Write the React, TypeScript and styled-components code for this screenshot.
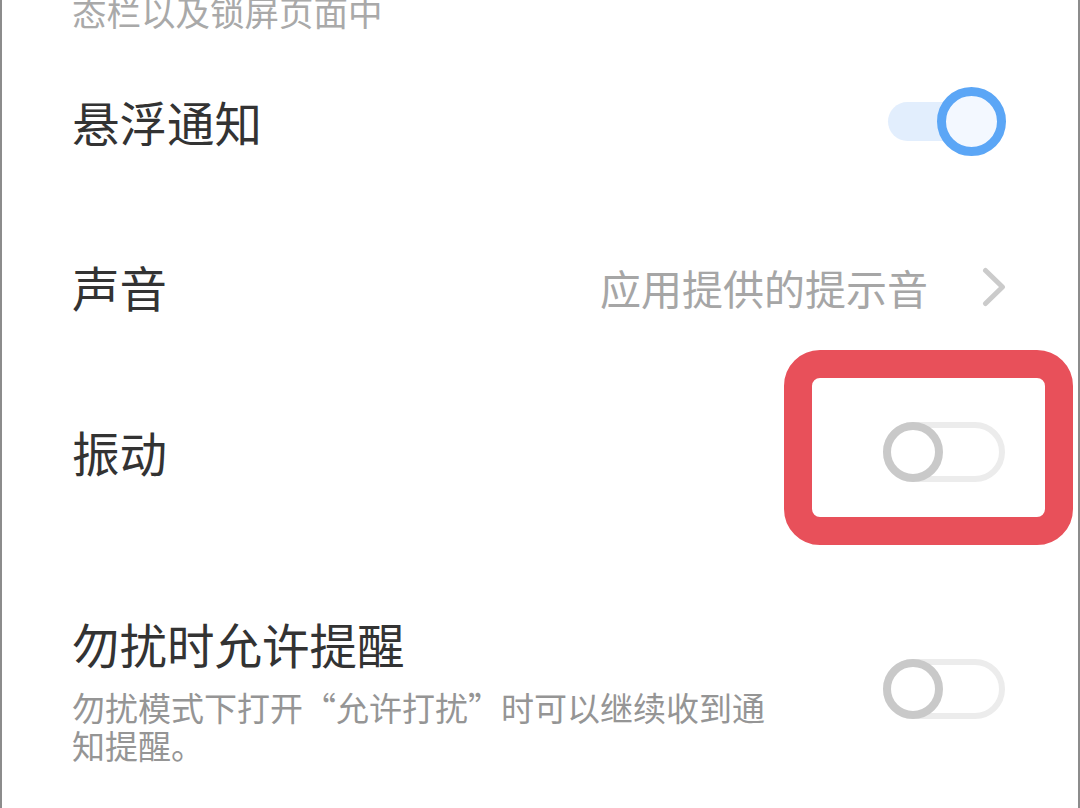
import React from 'react'
import styled, { createGlobalStyle, css } from 'styled-components'

const GlobalStyle = createGlobalStyle`
  html, body {
    margin: 0;
    padding: 0;
    background: #fff;
  }
  body {
    font-family: "Noto Sans CJK SC", "Noto Sans", sans-serif;
  }
`

const Screen = styled.div`
  position: relative;
  width: 1080px;
  height: 808px;
  box-sizing: border-box;
  overflow: hidden;
  background: #fff;
  border-left: 2px solid #8c8c8c;
  border-right: 2px solid #8c8c8c;
`

const List = styled.div`
  display: flex;
  flex-direction: column;
  margin-top: -8px;
  padding: 0 72px 0 70px;
`

// tail of the previous item's description, scrolled half out of view
const TailText = styled.div`
  font-size: 34.5px;
  line-height: 38px;
  color: #a9a9a9;
  padding-bottom: 9px;
`

const Row = styled.div<{ $tall?: boolean }>`
  display: flex;
  align-items: center;
  justify-content: space-between;
  ${(p) =>
    p.$tall
      ? css`
          padding-top: 80px;
        `
      : css`
          height: 165px;
        `}
`

const TextBlock = styled.div`
  display: flex;
  flex-direction: column;
`

const Title = styled.div`
  font-size: 47.5px;
  line-height: 60px;
  color: #333;
`

const Desc = styled.div`
  margin-top: 14px;
  max-width: 706px;
  font-size: 33px;
  line-height: 38px;
  color: #959595;
`

const Value = styled.div`
  display: flex;
  align-items: center;
  gap: 54px;
  font-size: 41px;
  line-height: 50px;
  color: #a6a6a6;
`

const Switch = styled.div`
  position: relative;
  flex-shrink: 0;
  width: 123px;
  height: 70px;
`

const Track = styled.div<{ $on: boolean }>`
  position: absolute;
  box-sizing: border-box;
  ${(p) =>
    p.$on
      ? css`
          left: 5px;
          top: 15.5px;
          width: 112px;
          height: 39px;
          border-radius: 20px;
          background: #e2eefd;
        `
      : css`
          left: 0;
          top: 5px;
          width: 122px;
          height: 60px;
          border-radius: 30px;
          border: 6px solid #ececec;
          background: #fff;
        `}
`

const Knob = styled.div<{ $on: boolean }>`
  position: absolute;
  box-sizing: border-box;
  border-radius: 50%;
  ${(p) =>
    p.$on
      ? css`
          right: 0;
          top: 0.5px;
          width: 69px;
          height: 69px;
          border: 9px solid #5ba6f6;
          background: #f3f8ff;
        `
      : css`
          left: 0;
          top: 5px;
          width: 60px;
          height: 60px;
          border: 8px solid #c9c9c9;
          background: #fff;
        `}
`

// red annotation frame drawn over the switch
const Marked = styled.div`
  position: relative;

  &::after {
    content: '';
    position: absolute;
    left: -99px;
    top: -66.5px;
    width: 289px;
    height: 195px;
    box-sizing: border-box;
    border: 28px solid #e8505a;
    border-radius: 36px;
    pointer-events: none;
  }
`

function Toggle({ on }: { on: boolean }): JSX.Element {
  return (
    <Switch>
      <Track $on={on} />
      <Knob $on={on} />
    </Switch>
  )
}

function Chevron(): JSX.Element {
  return (
    <svg width="24" height="40" viewBox="0 0 24 40" fill="none">
      <path
        d="M3.5 3.5 L20.5 20 L3.5 36.5"
        stroke="#cbcbcb"
        strokeWidth="5"
        strokeLinecap="round"
        strokeLinejoin="round"
      />
    </svg>
  )
}

const App: React.FC = () => {
  return (
    <>
      <GlobalStyle />
      <Screen lang="zh-CN">
        <List>
          <TailText>态栏以及锁屏页面中</TailText>
          <Row>
            <Title>悬浮通知</Title>
            <Toggle on />
          </Row>
          <Row>
            <Title>声音</Title>
            <Value>
              <span>应用提供的提示音</span>
              <Chevron />
            </Value>
          </Row>
          <Row>
            <Title>振动</Title>
            <Marked>
              <Toggle on={false} />
            </Marked>
          </Row>
          <Row $tall>
            <TextBlock>
              <Title>勿扰时允许提醒</Title>
              <Desc>勿扰模式下打开“允许打扰”时可以继续收到通知提醒。</Desc>
            </TextBlock>
            <Toggle on={false} />
          </Row>
        </List>
      </Screen>
    </>
  )
}

export default App
